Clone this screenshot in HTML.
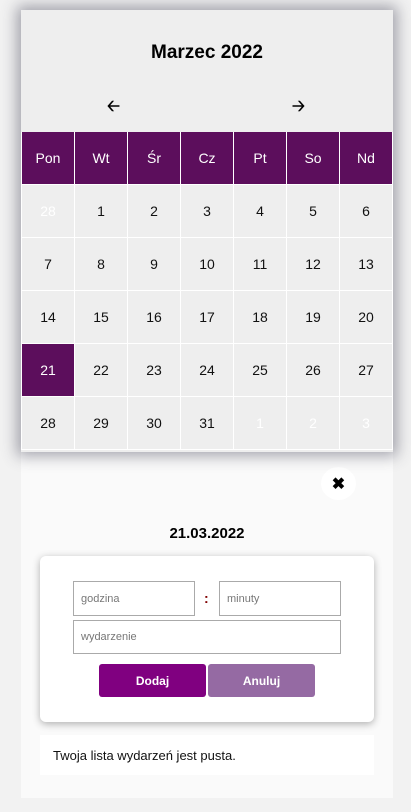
<!DOCTYPE html>
<html><head><meta charset="utf-8"><style>
*{box-sizing:border-box;margin:0;padding:0}
body{width:411px;height:812px;background:#f2f2f2;font-family:"Liberation Sans",Arial,sans-serif;position:relative;overflow:hidden}
.cal{position:absolute;left:21px;top:10px;width:372px;height:442px;background:#eee;box-shadow:0 0 14px 4px rgba(60,60,80,.45);z-index:2;overflow:hidden}
.title{position:absolute;top:32px;width:100%;text-align:center;font-weight:bold;font-size:19px}
.arr{position:absolute;top:85px;font-size:16px;font-weight:bold}
.grid{position:absolute;top:122px;left:0;width:372px;display:grid;grid-template-columns:repeat(7,1fr);grid-auto-rows:52px;background:#fff;gap:1px;padding:0 1px 1px 1px}
.grid div{background:#eee;display:flex;align-items:center;justify-content:center;font-size:14px;color:#111}
.grid .h{background:#5c0e5c;color:#fff;font-size:14px}
.grid .o{color:#fff}
.grid .s{background:#5c0e5c;color:#fff}
.low{position:absolute;left:21px;top:452px;width:372px;height:346px;background:#fafafa}
.x{position:absolute;left:300px;top:15px;width:35px;height:33px;border-radius:50%;background:#fff;display:flex;align-items:center;justify-content:center;font-size:16px;font-weight:bold}
.date{position:absolute;top:73px;width:100%;text-align:center;font-weight:bold;font-size:15px}
.card{position:absolute;left:19px;top:104px;width:334px;height:166px;background:#fff;border-radius:6px;box-shadow:0 2px 8px rgba(0,0,0,.3)}
.in{position:absolute;border:1px solid #aaa;background:#fff;font-size:11px;color:#777;padding-left:7px;display:flex;align-items:center}
.btn{position:absolute;top:108px;width:107px;height:33px;border-radius:3px;color:#fff;font-weight:bold;font-size:12px;display:flex;align-items:center;justify-content:center}
.list{position:absolute;left:19px;top:283px;width:334px;height:40px;background:#fff;font-size:13px;padding:13px 0 0 13px;color:#111}
</style></head><body>
<div class="cal">
<div class="title">Marzec 2022</div>
<div class="arr" style="left:86px">&#129120;</div>
<div class="arr" style="left:271px">&#129122;</div>
<div class="grid">
<div class="h">Pon</div><div class="h">Wt</div><div class="h">Śr</div><div class="h">Cz</div><div class="h">Pt</div><div class="h">So</div><div class="h">Nd</div>
<div class="o">28</div><div>1</div><div>2</div><div>3</div><div>4</div><div>5</div><div>6</div>
<div>7</div><div>8</div><div>9</div><div>10</div><div>11</div><div>12</div><div>13</div>
<div>14</div><div>15</div><div>16</div><div>17</div><div>18</div><div>19</div><div>20</div>
<div class="s">21</div><div>22</div><div>23</div><div>24</div><div>25</div><div>26</div><div>27</div>
<div>28</div><div>29</div><div>30</div><div>31</div><div class="o">1</div><div class="o">2</div><div class="o">3</div>
</div>
</div>
<div class="low">
<div class="x">&#10006;</div>
<div class="date">21.03.2022</div>
<div class="card">
<div class="in" style="left:33px;top:25px;width:122px;height:35px">godzina</div>
<div style="position:absolute;left:164px;top:34px;color:#800000;font-weight:bold;font-size:14px">:</div>
<div class="in" style="left:179px;top:25px;width:122px;height:35px">minuty</div>
<div class="in" style="left:33px;top:64px;width:268px;height:34px">wydarzenie</div>
<div class="btn" style="left:59px;background:#800080">Dodaj</div>
<div class="btn" style="left:168px;background:#956aa3">Anuluj</div>
</div>
<div class="list">Twoja lista wydarzeń jest pusta.</div>
</div>
</body></html>
